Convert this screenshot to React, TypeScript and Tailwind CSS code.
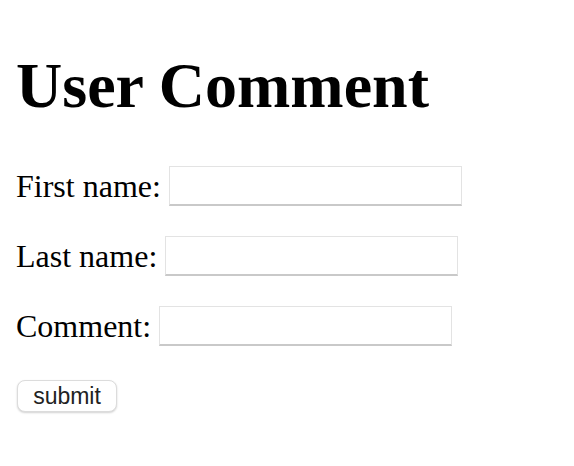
const Field = ({ label }: { label: string }) => (
  <div className="flex h-10 items-center gap-2">
    <span className="text-[32px] leading-[38px]">{label}</span>
    <input
      type="text"
      className="h-10 w-[293px] border border-[#e3e3e3] border-b-2 border-b-[#c9c9c9] bg-white outline-none"
    />
  </div>
);

const App = () => {
  return (
    <div className="min-h-screen bg-white p-4 font-['Liberation_Serif',serif] text-black">
      <h1 className="mt-[33px] mb-[43px] text-[64px] font-bold leading-[74px]">User Comment</h1>
      <form onSubmit={(e) => e.preventDefault()} className="flex flex-col items-start gap-[30px]">
        <Field label="First name:" />
        <Field label="Last name:" />
        <Field label="Comment:" />
        <button
          type="submit"
          className="mt-1 ml-px h-8 w-[100px] rounded-lg border border-[#dcdcdc] bg-white font-['Liberation_Sans',sans-serif] text-[23px] leading-none text-[#222] shadow-[0_1px_2px_rgba(0,0,0,0.18)]"
        >
          submit
        </button>
      </form>
    </div>
  );
};

export default App;
